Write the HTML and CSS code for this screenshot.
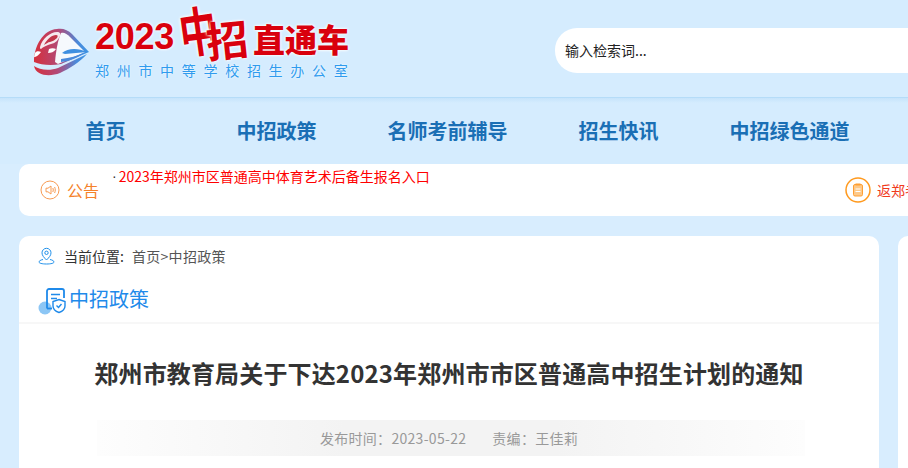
FILE: index.html
```html
<!DOCTYPE html>
<html lang="zh">
<head>
    <meta charset="UTF-8">
    <title>2023中招直通车</title>
    <link rel="stylesheet" href="styles.css">
</head>
<body>
    <header class="top">
        <div class="logo">
            <svg class="train" width="70" height="60" viewBox="0 0 70 60">
                <defs>
                    <linearGradient id="body" x1="0" y1="0" x2="1" y2="0">
                        <stop offset="0" stop-color="#d62f3c"/>
                        <stop offset="0.45" stop-color="#b24a78"/>
                        <stop offset="0.8" stop-color="#4a8adb"/>
                        <stop offset="1" stop-color="#3c95e4"/>
                    </linearGradient>
                </defs>
                <path d="M9 42C9 26 18 10 32 9C38 8 43 10 47 14L64 32L36 44C26 46 16 45 9 42Z" fill="url(#body)"/>
                <path d="M36 13C39 12 42 14 45 17L60 32L33 44L30 42C31 30 33 20 36 13Z" fill="#f6f9fd"/>
                <path d="M15 27C17 19 25 12 32 12C35 12 36 14 35 16C33 20 31 23 26 24C22 25 18 27 16 29C15 29 15 28 15 27Z" fill="#f6e9ee"/>
                <path d="M19 25C22 19 27 15 31 15C33 15 33 16 32 18C30 20 28 21 25 22C23 22 21 24 19 25Z" fill="#c2364a"/>
                <path d="M10 33C11 31 14 31 16 32C14 35 11 37 9 37Z" fill="#fff"/>
                <path d="M24 29C26 28 29 28 31 29C29 32 26 33 23 33Z" fill="#fff"/>
                <path d="M37 33C43 28 53 28 62 32L40 34Z" fill="#3f8fe0"/>
                <path d="M36 39C45 38 52 36 59 33C52 38 45 41 36 42Z" fill="#4a8adb"/>
                <path d="M9 46C14 50 25 51 33 48L62 34C55 42 44 49 35 53C25 57 11 56 9 46Z" fill="url(#body)"/>
            </svg>
            <div class="logo-text">
                <div class="logo-main">
                    <span class="logo-year">2023</span>
                    <span class="logo-zhong">中</span>
                    <span class="logo-zhao">招</span>
                    <span class="logo-end">直通车</span>
                </div>
                <div class="logo-sub">郑州市中等学校招生办公室</div>
            </div>
        </div>
        <div class="search">输入检索词...</div>
    </header>

    <nav class="nav">
        <a>首页</a>
        <a>中招政策</a>
        <a>名师考前辅导</a>
        <a>招生快讯</a>
        <a>中招绿色通道</a>
    </nav>

    <section class="notice">
        <div class="notice-label">
            <svg width="20" height="20" viewBox="0 0 20 20" fill="none" stroke="#f79a52">
                <circle cx="10" cy="10" r="9"/>
                <path d="M6 8.200H8L11 6V14L8 11.800H6Z"/>
                <path d="M12.800 8C13.400 9.200 13.400 10.800 12.800 12M14.600 7C15.500 9 15.500 11 14.600 13"/>
            </svg>
            <span>公告</span>
        </div>
        <div class="notice-list">
            <i>·</i>
            <a class="notice-link">2023年郑州市区普通高中体育艺术后备生报名入口</a>
        </div>
        <div class="notice-side">
            <svg width="26" height="26" viewBox="0 0 26 26">
                <circle cx="13" cy="13" r="12" fill="#fff" stroke="#ff9a1f" stroke-width="1.500"/>
                <rect x="8.500" y="7.500" width="9" height="11.500" rx="1.500" fill="#fdc98a" stroke="#ff9f33"/>
                <rect x="10.500" y="6.500" width="5" height="2" fill="#ff9f33"/>
                <path d="M10.500 12H15.500M10.500 14.500H15.500" stroke="#fff"/>
            </svg>
            <span>返郑考生报名入口</span>
        </div>
    </section>

    <div class="columns">
        <main class="card">
            <div class="crumb">
                <svg width="17" height="18" viewBox="0 0 17 18" fill="none" stroke="#1f90ea">
                    <path d="M8.500 13C6 10.500 4 8.500 4 5.800A4.500 4.500 0 0 1 13 5.800C13 8.500 11 10.500 8.500 13Z"/>
                    <circle cx="8.500" cy="5.800" r="1.700"/>
                    <path d="M5 12.500C2.500 13 1 14 1 15C1 16.200 4 17 8.500 17S16 16.200 16 15C16 14 14.500 13 12 12.500"/>
                </svg>
                <span class="crumb-label">当前位置:</span>
                <span class="crumb-path">首页&gt;中招政策</span>
            </div>
            <div class="section-head">
                <svg class="section-icon" width="30" height="28" viewBox="0 0 30 28" fill="none">
                    <circle cx="7" cy="21" r="6.500" fill="#8cc6f5"/>
                    <path d="M9 21.500V4A2 2 0 0 1 11 2H24A2 2 0 0 1 26 4V11" stroke="#1f8aea" stroke-width="1.800"/>
                    <path d="M9 21.500H14" stroke="#1f8aea" stroke-width="1.800"/>
                    <path d="M13 7.500H22M13 11.500H19" stroke="#1f8aea" stroke-width="1.600"/>
                    <path d="M21 12.500L27 14.500V19C27 22 24 24.500 21 25.500C18 24.500 15 22 15 19V14.500Z" fill="#fff" stroke="#1f8aea" stroke-width="1.400"/>
                    <path d="M18.500 18.500L20.500 20.500L23.500 17" stroke="#1f8aea" stroke-width="1.400"/>
                </svg>
                <h2>中招政策</h2>
            </div>
            <article>
                <h1>郑州市教育局关于下达2023年郑州市市区普通高中招生计划的通知</h1>
                <div class="meta">
                    <span>发布时间：2023-05-22</span>
                    <span>责编：王佳莉</span>
                </div>
            </article>
        </main>
        <aside class="card side"></aside>
    </div>
</body>
</html>
```

FILE: styles.css
```css
body {
    margin: 0;
    width: 908px;
    height: 468px;
    overflow: hidden;
    background: #d8edfe;
    font-family: "Noto Sans CJK SC", "Liberation Sans", sans-serif;
    color: #333;
}
.top {
    height: 98px;
    box-sizing: border-box;
    display: flex;
    align-items: flex-start;
    border-bottom: 1px solid #b5dcf8;
    overflow: hidden;
    width: 1200px;
    background: #d5ecfe;
}
.logo {
    display: flex;
    width: 555px;
    flex: none;
    padding-left: 25px;
    box-sizing: border-box;
}
.train {
    margin-top: 20px;
    flex: none;
}
.logo-text {
    width: 260px;
}
.logo-main {
    display: flex;
    align-items: flex-end;
    height: 60px;
    color: #d9000d;
    font-weight: 900;
    text-shadow: 0 0 3px #fff, 0 0 3px #fff;
}
.logo-year {
    font-family: "Liberation Sans", sans-serif;
    font-weight: 700;
    font-size: 36px;
    line-height: 46px;
    letter-spacing: -0.300px;
    width: 84px;
}
.logo-zhong {
    font-size: 38px;
    font-weight: 700;
    line-height: 42px;
    width: 27px;
    transform: translateY(-9px) rotate(-8deg) scale(1, 1.400);
}
.logo-zhao {
    font-size: 42px;
    font-weight: 700;
    line-height: 44px;
    width: 47px;
    transform: rotate(-6deg);
}
.logo-end {
    font-size: 32px;
    line-height: 44px;
    white-space: nowrap;
}
.logo-sub {
    color: #2f9bee;
    font-size: 14px;
    line-height: 20px;
    letter-spacing: 7.700px;
    white-space: nowrap;
    text-shadow: 0 0 2px #fff;
}
.search {
    margin-top: 28px;
    width: 500px;
    height: 45px;
    line-height: 45px;
    padding-left: 10px;
    background: #fff;
    border-radius: 22px 0 0 22px;
    font-size: 14px;
    color: #222;
}
.nav {
    height: 66px;
    padding-left: 20px;
    display: grid;
    grid-template-columns: repeat(5, 171px);
    background: linear-gradient(#c6e4fb, #d5ecfe 5px);
}
.nav a {
    text-align: center;
    font-size: 20px;
    line-height: 66px;
    font-weight: 700;
    color: #1a6fb5;
    white-space: nowrap;
}
.notice {
    margin-left: 19px;
    width: 1100px;
    height: 52px;
    display: flex;
    background: #fff;
    border-radius: 10px;
}
.notice-label {
    width: 92px;
    box-sizing: border-box;
    padding-left: 21px;
    flex: none;
    display: flex;
    align-items: center;
    gap: 7px;
    color: #f5822a;
    font-size: 16px;
    height: 52px;
}
.notice-list {
    width: 734px;
    flex: none;
    display: flex;
    gap: 2px;
    font-size: 14px;
    line-height: 25px;
    white-space: nowrap;
}
.notice-list i {
    font-family: "Liberation Sans", sans-serif;
    font-style: normal;
    color: #333;
    margin-left: 1px;
}
.notice-link {
    color: #f00;
}
.notice-side {
    display: flex;
    align-items: center;
    gap: 6px;
    font-size: 14px;
    color: #f03a1c;
    height: 52px;
    white-space: nowrap;
}
.columns {
    display: flex;
    gap: 19px;
    margin: 20px 0 0 19px;
}
.card {
    width: 860px;
    height: 232px;
    flex: none;
    background: #fff;
    border-radius: 10px 10px 0 0;
}
.side {
    width: 300px;
}
.crumb {
    height: 41px;
    box-sizing: border-box;
    padding: 0 0 2px 19px;
    display: flex;
    align-items: center;
    font-size: 14px;
    color: #333;
}
.crumb-label {
    margin-left: 9px;
    margin-right: 8px;
}
.crumb-path {
    color: #555;
    letter-spacing: 0.300px;
}
.section-head {
    height: 47px;
    box-sizing: border-box;
    padding-left: 19px;
    display: flex;
    align-items: center;
    border-bottom: 2px solid #f7f7f7;
}
.section-icon {
    margin-top: 3px;
    flex: none;
}
.section-head h2 {
    margin: 0 0 2px 1px;
    font-size: 20px;
    font-weight: 400;
    color: #1f8aea;
}
h1 {
    margin: 0;
    height: 96px;
    line-height: 98px;
    font-size: 24px;
    letter-spacing: 0.150px;
    text-align: center;
    color: #333;
    white-space: nowrap;
}
.meta {
    height: 36px;
    margin: 0 74px 0 78px;
    padding-right: 4px;
    display: flex;
    justify-content: center;
    align-items: center;
    gap: 26px;
    font-size: 14px;
    letter-spacing: 0.300px;
    color: #999;
    background: linear-gradient(to right, #fdfdfd, #f3f3f3 35%, #f3f3f3 65%, #fdfdfd);
}
```
